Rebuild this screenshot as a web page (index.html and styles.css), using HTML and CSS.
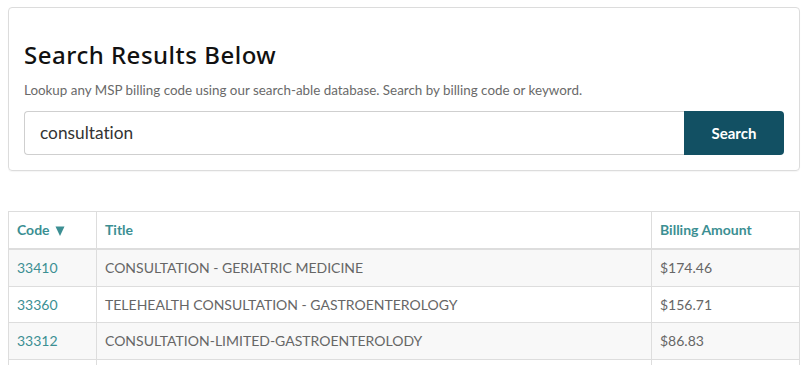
FILE: index.html
```html
<!DOCTYPE html>
<html>
<head>
<meta charset="utf-8">
<link rel="stylesheet" href="styles.css">
</head>
<body>
<div class="page">
  <section class="card">
    <h2 class="title">Search Results Below</h2>
    <p class="lead">Lookup any MSP billing code using our search-able database. Search by billing code or keyword.</p>
    <form class="search">
      <input class="search-input" type="text" value="consultation">
      <button class="search-btn" type="button">Search</button>
    </form>
  </section>
  <table class="results">
    <thead>
      <tr>
        <th class="col-code"><a>Code</a><svg class="caret" width="10" height="10" viewBox="0 0 10 10"><polygon points="0.5,0.5 9.5,0.5 5,10" fill="#3c8f93"/></svg></th>
        <th class="col-title"><a>Title</a></th>
        <th class="col-amount"><a>Billing Amount</a></th>
      </tr>
    </thead>
    <tbody>
      <tr><td><a>33410</a></td><td>CONSULTATION - GERIATRIC MEDICINE</td><td>$174.46</td></tr>
      <tr><td><a>33360</a></td><td>TELEHEALTH CONSULTATION - GASTROENTEROLOGY</td><td>$156.71</td></tr>
      <tr><td><a>33312</a></td><td>CONSULTATION-LIMITED-GASTROENTEROLODY</td><td>$86.83</td></tr>
      <tr class="blank"><td></td><td></td><td></td></tr>
    </tbody>
  </table>
</div>
</body>
</html>
```
FILE: styles.css
```css
* { box-sizing: border-box; }
html, body { margin: 0; padding: 0; background: #fff; }
body {
  font-family: Lato, "Liberation Sans", sans-serif;
  font-size: 14px;
  line-height: 1.42857;
  color: #333;
  height: 365px;
  overflow: hidden;
  font-variant-ligatures: none;
}
.page {
  padding: 7px 10px 0 8px;
}
.card {
  border: 1px solid #dcdcdc;
  border-radius: 4px;
  padding: 15px 15px 15px 15px;
  box-shadow: 0 1px 1px rgba(0,0,0,0.04);
}
.title {
  font-family: "Noto Sans", "DejaVu Sans", sans-serif;
  font-weight: 500;
  font-size: 24px;
  line-height: 1.1;
  color: #111;
  margin: 19px 0 13px 0;
  letter-spacing: 0.5px;
}
.lead {
  margin: 0 0 10px 0;
  font-size: 13.4px;
  color: #6a6a6a;
}
.search {
  display: flex;
  margin: 0;
}
.search-input {
  flex: 1;
  height: 44px;
  border: 1px solid #cfcfcf;
  border-right: none;
  border-radius: 4px 0 0 4px;
  padding: 0 15px;
  font-family: Lato, "Liberation Sans", sans-serif;
  font-size: 17.3px;
  color: #333;
  outline: none;
  font-variant-ligatures: none;
}
.search-btn {
  width: 100px;
  height: 44px;
  border: none;
  border-radius: 0 4px 4px 0;
  background: #125063;
  color: #fff;
  font-family: Lato, "Liberation Sans", sans-serif;
  font-weight: 700;
  font-size: 15px;
}
.results {
  margin-top: 40px;
  width: 100%;
  border-collapse: collapse;
  border: 1px solid #ddd;
}
.results th, .results td {
  border: 1px solid #ddd;
  padding: 8px;
  text-align: left;
  vertical-align: top;
}
.results thead th {
  border-bottom: 2px solid #ddd;
  font-weight: 700;
  color: #3c8f93;
}
.results th a { color: #3c8f93; }
.caret { margin-left: 5px; vertical-align: -1px; }
.col-code { width: 88px; }
.col-amount { width: 148px; }
.results tbody td {
  color: #666;
  font-size: 14px;
}
.results tbody td a { color: #3c8f93; }
.results tbody tr:nth-child(odd) { background: #f8f8f8; }
.results tbody tr.blank td { height: 37px; }
```
